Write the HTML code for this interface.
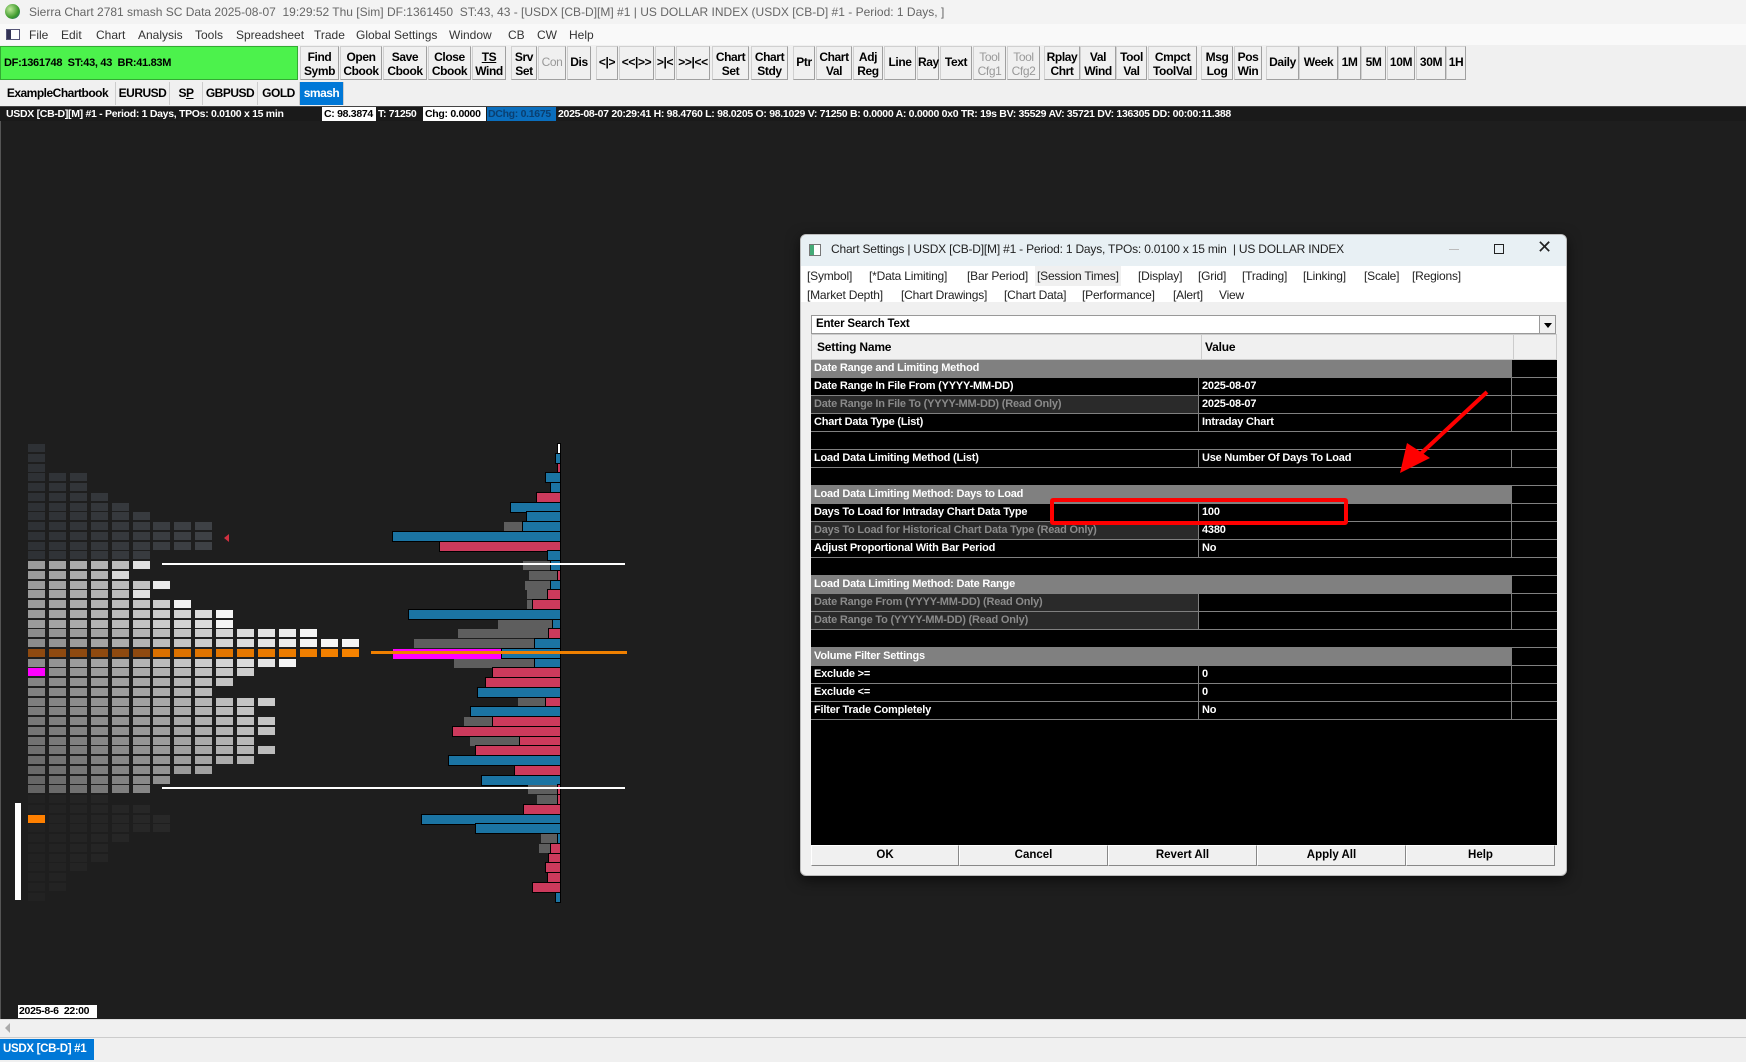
<!DOCTYPE html>
<html><head><meta charset="utf-8"><style>
*{margin:0;padding:0;box-sizing:border-box}
body{width:1746px;height:1062px;overflow:hidden;background:#1e1e1e;font-family:"Liberation Sans",sans-serif;position:relative}
.a{position:absolute;white-space:nowrap}
#title{left:0;top:0;width:1746px;height:24px;background:#f3f3f3;color:#666;font-size:12px;line-height:24px;padding-left:29px}
#menu{left:0;top:24px;width:1746px;height:21px;background:#f9f9f9;font-size:12px;color:#333}
#menu span{position:absolute;top:4px}
#tb{left:0;top:45px;width:1746px;height:61px;background:#f0f0f0}
.b{position:absolute;top:46px;height:34px;background:#f0f0f0;border:1px solid #d0d0d0;border-bottom-color:#a0a0a0;border-right-color:#a0a0a0;font:bold 12px "Liberation Sans",sans-serif;text-align:center;line-height:14px;padding-top:3px;color:#000;letter-spacing:-0.4px}
.b.one{line-height:30px;padding-top:0}
.b.g{color:#999;font-weight:normal}
.t{position:absolute;top:82px;height:23px;font:bold 12px "Liberation Sans",sans-serif;letter-spacing:-0.5px;line-height:23px;text-align:center;border-right:1px solid #ccc;color:#000}
#info{left:0;top:106px;width:1746px;height:15px;background:#1a1a1a;border-top:1px solid #444;font:bold 10.5px "Liberation Sans",sans-serif;letter-spacing:-0.3px;color:#fff;line-height:14px}
#dlg{left:800px;top:234px;width:767px;height:642px;background:#f0f0f0;border:1px solid #bbb;border-radius:6px;box-shadow:0 4px 14px rgba(0,0,0,.6);overflow:hidden}
#dt{position:absolute;left:0;top:0;width:100%;height:34px;background:#e8f0f4;font-size:12px;color:#222;line-height:28px;padding-left:30px;letter-spacing:-0.2px}
#tabs{position:absolute;left:0;top:31px;width:100%;height:36px;background:#fff;font-size:12px;color:#222;letter-spacing:-0.2px}
#tabs span{position:absolute}
.r{position:absolute;left:10px;width:746px;height:18px;border-bottom:1px solid #808080;font:bold 11px "Liberation Sans",sans-serif;letter-spacing:-0.2px;color:#fff;line-height:17px}
.r .n{position:absolute;left:0;top:0;width:388px;height:17px;padding-left:3px;background:#000;border-right:1px solid #808080}
.r .v{position:absolute;left:389px;top:0;width:312px;height:17px;padding-left:2px;background:#000;border-right:1px solid #808080}
.r .x{position:absolute;left:702px;top:0;width:44px;height:17px;background:#000}
.r.s .n{width:701px;background:#808080;border-right:none}
.r.ro .n{background:#2a2a2a;color:#8a8a8a}
.db{position:absolute;top:610px;height:21px;background:#f0f0f0;border:1px solid #fff;border-right-color:#888;border-bottom-color:#888;font:bold 11.5px "Liberation Sans",sans-serif;text-align:center;line-height:19px;color:#000}
</style></head><body>
<div class="a" id="title">Sierra Chart 2781 smash SC Data 2025-08-07 &nbsp;19:29:52 Thu [Sim] DF:1361450 &nbsp;ST:43, 43 - [USDX [CB-D][M] #1 | US DOLLAR INDEX (USDX [CB-D] #1 - Period: 1 Days, ]</div>
<div class="a" style="left:5px;top:4px;width:15px;height:15px;border-radius:50%;background:radial-gradient(circle at 35% 35%,#bfe89a,#3d9a2c 60%,#1f5f8f)"></div>
<div class="a" id="menu">
<span style="left:6px;top:5px;width:14px;height:11px;border:1px solid #557;background:linear-gradient(90deg,#335 0 4px,#fff 4px)"></span>
<span style="left:29px">File</span><span style="left:61px">Edit</span><span style="left:96px">Chart</span><span style="left:138px">Analysis</span><span style="left:195px">Tools</span><span style="left:236px">Spreadsheet</span><span style="left:314px">Trade</span><span style="left:356px">Global Settings</span><span style="left:449px">Window</span><span style="left:508px">CB</span><span style="left:537px">CW</span><span style="left:569px">Help</span></div>
<div class="a" id="tb"></div>
<div class="a" style="left:0;top:46px;width:298px;height:34px;background:#4cf24c;border:1px solid #3a3;font:bold 11px 'Liberation Sans',sans-serif;letter-spacing:-0.3px;line-height:32px;padding-left:3px">DF:1361748 &nbsp;ST:43, 43 &nbsp;BR:41.83M</div>
<div class="b" style="left:300px;width:39px">Find<br>Symb</div>
<div class="b" style="left:340px;width:42px">Open<br>Cbook</div>
<div class="b" style="left:383px;width:44px">Save<br>Cbook</div>
<div class="b" style="left:428px;width:43px">Close<br>Cbook</div>
<div class="b" style="left:472px;width:34px"><u>TS</u><br>Wind</div>
<div class="b" style="left:511px;width:26px">Srv<br>Set</div>
<div class="b one g" style="left:538px;width:28px">Con</div>
<div class="b one" style="left:567px;width:24px">Dis</div>
<div class="b one" style="left:596px;width:22px">&lt;|&gt;</div>
<div class="b one" style="left:619px;width:35px">&lt;&lt;|&gt;&gt;</div>
<div class="b one" style="left:655px;width:20px">&gt;|&lt;</div>
<div class="b one" style="left:676px;width:34px">&gt;&gt;|&lt;&lt;</div>
<div class="b" style="left:712px;width:37px">Chart<br>Set</div>
<div class="b" style="left:751px;width:37px">Chart<br>Stdy</div>
<div class="b one" style="left:793px;width:22px">Ptr</div>
<div class="b" style="left:816px;width:36px">Chart<br>Val</div>
<div class="b" style="left:853px;width:30px">Adj<br>Reg</div>
<div class="b one" style="left:884px;width:32px">Line</div>
<div class="b one" style="left:917px;width:22px">Ray</div>
<div class="b one" style="left:940px;width:32px">Text</div>
<div class="b g" style="left:973px;width:33px">Tool<br>Cfg1</div>
<div class="b g" style="left:1007px;width:33px">Tool<br>Cfg2</div>
<div class="b" style="left:1044px;width:36px">Rplay<br>Chrt</div>
<div class="b" style="left:1080px;width:36px">Val<br>Wind</div>
<div class="b" style="left:1116px;width:31px">Tool<br>Val</div>
<div class="b" style="left:1148px;width:49px">Cmpct<br>ToolVal</div>
<div class="b" style="left:1201px;width:32px">Msg<br>Log</div>
<div class="b" style="left:1234px;width:28px">Pos<br>Win</div>
<div class="b one" style="left:1266px;width:33px">Daily</div>
<div class="b one" style="left:1299px;width:39px">Week</div>
<div class="b one" style="left:1338px;width:23px">1M</div>
<div class="b one" style="left:1361px;width:25px">5M</div>
<div class="b one" style="left:1387px;width:28px">10M</div>
<div class="b one" style="left:1416px;width:30px">30M</div>
<div class="b one" style="left:1446px;width:20px">1H</div>
<div class="t" style="left:0;width:116px">ExampleChartbook</div>
<div class="t" style="left:116px;width:54px">EURUSD</div>
<div class="t" style="left:170px;width:33px">S<u>P</u></div>
<div class="t" style="left:203px;width:55px">GBPUSD</div>
<div class="t" style="left:258px;width:42px">GOLD</div>
<div class="t" style="left:300px;width:44px;background:#0078d7;color:#fff">smash</div>
<div class="a" id="info"><span class="a" style="left:6px">USDX [CB-D][M] #1 - Period: 1 Days, TPOs: 0.0100 x 15 min</span><span class="a" style="left:322px;width:54px;background:#fff;color:#000;padding-left:2px">C: 98.3874</span><span class="a" style="left:378px">T: 71250</span><span class="a" style="left:423px;width:63px;background:#fff;color:#000;padding-left:2px">Chg: 0.0000</span><span class="a" style="left:487px;width:69px;background:#0a6ebd;color:#0a3f70;padding-left:1px">DChg: 0.1675</span><span class="a" style="left:558px">2025-08-07 20:29:41 H: 98.4760 L: 98.0205 O: 98.1029 V: 71250 B: 0.0000 A: 0.0000 0x0 TR: 19s BV: 35529 AV: 35721 DV: 136305 DD: 00:00:11.388</span></div>
<div class="a" style="left:0;top:121px;width:1px;height:898px;background:#555"></div>
<div id="chart"></div>
<div class="a" style="left:162px;top:563px;width:463px;height:2px;background:#fff"></div>
<div class="a" style="left:162px;top:787px;width:463px;height:2px;background:#fff"></div>
<div class="a" style="left:371px;top:651px;width:256px;height:3px;background:#f08000"></div>
<div class="a" style="left:15px;top:803px;width:6px;height:97px;background:#fff"></div>
<div class="a" style="left:224px;top:534px;width:0;height:0;border-top:4px solid transparent;border-bottom:4px solid transparent;border-right:5px solid #d03040"></div>
<div class="a" style="left:18px;top:1005px;width:79px;height:13px;background:#fff;color:#000;font:bold 10.5px 'Liberation Sans',sans-serif;letter-spacing:-0.3px;line-height:13px;padding-left:1px">2025-8-6 &nbsp;22:00</div>
<div class="a" style="left:0;top:1019px;width:1746px;height:18px;background:#f0f0f0;border-top:1px solid #ddd"></div>
<div class="a" style="left:5px;top:1023px;width:0;height:0;border-top:5px solid transparent;border-bottom:5px solid transparent;border-right:5px solid #aaa"></div>
<div class="a" style="left:0;top:1037px;width:1746px;height:25px;background:#f0f0f0;border-top:1px solid #ccc"></div>
<div class="a" style="left:0;top:1039px;width:94px;height:21px;background:#0078d7;color:#fff;font:bold 11.5px 'Liberation Sans',sans-serif;letter-spacing:-0.3px;line-height:21px;padding-left:3px">USDX [CB-D] #1</div>

<div class="a" id="dlg">
<div id="dt">Chart Settings | USDX [CB-D][M] #1 - Period: 1 Days, TPOs: 0.0100 x 15 min &nbsp;| US DOLLAR INDEX</div>
<div style="position:absolute;left:8px;top:9px;width:12px;height:12px;border:1px solid #777;background:linear-gradient(90deg,#4a7 0 4px,#fff 4px)"></div>
<div style="position:absolute;left:648px;top:14px;width:10px;height:1px;background:#bbb"></div>
<div style="position:absolute;left:693px;top:9px;width:10px;height:10px;border:1px solid #222"></div>
<div style="position:absolute;left:736px;top:2px;font-size:18px;color:#222">✕</div>
<div id="tabs">
<span style="left:6px;top:3px">[Symbol]</span><span style="left:68px;top:3px">[*Data Limiting]</span><span style="left:166px;top:3px">[Bar Period]</span><span style="left:234px;top:0;background:#f0f0f0;padding:3px 2px">[Session Times]</span><span style="left:337px;top:3px">[Display]</span><span style="left:397px;top:3px">[Grid]</span><span style="left:441px;top:3px">[Trading]</span><span style="left:502px;top:3px">[Linking]</span><span style="left:563px;top:3px">[Scale]</span><span style="left:611px;top:3px">[Regions]</span>
<span style="left:6px;top:22px">[Market Depth]</span><span style="left:100px;top:22px">[Chart Drawings]</span><span style="left:203px;top:22px">[Chart Data]</span><span style="left:281px;top:22px">[Performance]</span><span style="left:372px;top:22px">[Alert]</span><span style="left:418px;top:22px">View</span></div>
<div style="position:absolute;left:10px;top:80px;width:745px;height:19px;background:#fff;border:1px solid #999;font:bold 11.5px 'Liberation Sans',sans-serif;letter-spacing:-0.2px;line-height:17px;padding-left:4px">Enter Search Text</div>
<div style="position:absolute;left:738px;top:81px;width:16px;height:17px;background:#f0f0f0;border-left:1px solid #999"><div style="margin:7px 0 0 4px;width:0;height:0;border-left:4px solid transparent;border-right:4px solid transparent;border-top:5px solid #000"></div></div>
<div style="position:absolute;left:10px;top:99px;width:746px;height:26px;background:#f0f0f0;border:1px solid #ccc;font:bold 12px 'Liberation Sans',sans-serif;letter-spacing:-0.2px;line-height:24px"><span style="position:absolute;left:5px">Setting Name</span><span style="position:absolute;left:389px;top:0;height:24px;border-left:1px solid #ccc;padding-left:3px">Value</span><span style="position:absolute;left:701px;top:0;height:24px;border-left:1px solid #ccc"></span></div>
<div style="position:absolute;left:10px;top:125px;width:746px;height:485px;background:#000"></div>
<div class="r s" style="top:125px"><div class="n">Date Range and Limiting Method</div><div class="x"></div></div>
<div class="r" style="top:143px"><div class="n">Date Range In File From (YYYY-MM-DD)</div><div class="v">2025-08-07</div><div class="x"></div></div>
<div class="r ro" style="top:161px"><div class="n">Date Range In File To (YYYY-MM-DD) (Read Only)</div><div class="v">2025-08-07</div><div class="x"></div></div>
<div class="r" style="top:179px"><div class="n">Chart Data Type (List)</div><div class="v">Intraday Chart</div><div class="x"></div></div>
<div class="r" style="top:197px"></div>
<div class="r" style="top:215px"><div class="n">Load Data Limiting Method (List)</div><div class="v">Use Number Of Days To Load</div><div class="x"></div></div>
<div class="r" style="top:233px"></div>
<div class="r s" style="top:251px"><div class="n">Load Data Limiting Method: Days to Load</div><div class="x"></div></div>
<div class="r" style="top:269px"><div class="n">Days To Load for Intraday Chart Data Type</div><div class="v">100</div><div class="x"></div></div>
<div class="r ro" style="top:287px"><div class="n">Days To Load for Historical Chart Data Type (Read Only)</div><div class="v">4380</div><div class="x"></div></div>
<div class="r" style="top:305px"><div class="n">Adjust Proportional With Bar Period</div><div class="v">No</div><div class="x"></div></div>
<div class="r" style="top:323px"></div>
<div class="r s" style="top:341px"><div class="n">Load Data Limiting Method: Date Range</div><div class="x"></div></div>
<div class="r ro" style="top:359px"><div class="n">Date Range From (YYYY-MM-DD) (Read Only)</div><div class="v"></div><div class="x"></div></div>
<div class="r ro" style="top:377px"><div class="n">Date Range To (YYYY-MM-DD) (Read Only)</div><div class="v"></div><div class="x"></div></div>
<div class="r" style="top:395px"></div>
<div class="r s" style="top:413px"><div class="n">Volume Filter Settings</div><div class="x"></div></div>
<div class="r" style="top:431px"><div class="n">Exclude &gt;=</div><div class="v">0</div><div class="x"></div></div>
<div class="r" style="top:449px"><div class="n">Exclude &lt;=</div><div class="v">0</div><div class="x"></div></div>
<div class="r" style="top:467px"><div class="n">Filter Trade Completely</div><div class="v">No</div><div class="x"></div></div>
<div class="db" style="left:10px;width:148px">OK</div>
<div class="db" style="left:158px;width:149px">Cancel</div>
<div class="db" style="left:307px;width:149px">Revert All</div>
<div class="db" style="left:456px;width:149px">Apply All</div>
<div class="db" style="left:605px;width:149px">Help</div>
<div style="position:absolute;left:249px;top:263px;width:298px;height:27px;border:4px solid #f00;border-radius:3px"></div>
</div>
<svg class="a" style="left:1380px;top:380px" width="120" height="100"><line x1="107" y1="12" x2="34" y2="80" stroke="#f00" stroke-width="4"/><polygon points="20,93 27,63 50,78" fill="#f00"/></svg>
<script>
var c=document.getElementById('chart'),h='';
function R(x,y,w,hh,col,b){h+='<div class="a" style="left:'+x+'px;top:'+y+'px;width:'+w+'px;height:'+hh+'px;background:'+col+(b?';outline:1px solid #000':'')+'"></div>';}
var cnt=[1,1,1,3,3,4,5,6,9,9,9,6,6,5,7,6,8,10,10,14,16,16,13,11,10,9,12,11,12,12,11,12,11,9,7,6,4,6,7,7,5,4,4,3,2,2,1];
for(var r=0;r<47;r++){var y=Math.round(444+r*9.75);for(var k=0;k<cnt[r];k++){var x=Math.round(28+k*20.9),col;
if(r<12){var v=46+k*2;col='rgb('+v+','+(v+3)+','+(v+7)+')';}
else if(r>=36){var v=34+k;col='rgb('+v+','+v+','+v+')';}
else if(r==21){col=k<6?'#8f4a10':'rgb('+(200+k*3)+','+(100+k*2)+',0)';}
else{var v=r<23?Math.min(245,140+k*8+(r<19?15:0)):Math.max(100,Math.min(220,135+k*7-(r-23)*3));if(k==cnt[r]-1&&r<23)v=Math.min(245,v+30);col='rgb('+v+','+v+','+v+')';}
if(r==23&&k==0)col='#ff00ff';if(r==38&&k==0)col='#ff8000';
R(x,y,17,8,col);}}
var B=[['w',1366],['b',1361],['r',1366],['b',1337],['b',1351],['r',1315],['b',1251],['b',1290],['b',1281,1235],['b',964],['r',1079],['b',1342],['b',1351,1281],['r',1368,1296],['b',1351,1287],['r',1342,1290],['r',1305,1290],['b',1003],['b',1356,1220],['r',1346,1121],['b',1310,1015],['b',1231],['b',1310,1112],['r',1209],['r',1190],['b',1170],['r',1337,1269],['b',1155],['r',1209,1138],['r',1109],['r',1275,1151],['r',1165],['b',1099],['r',1261],['b',1180],['r',1368,1294],['r',1368,1316],['r',1285],['b',1035],['b',1165],['b',1368,1325],['r',1351,1321],['r',1346],['r',1337],['r',1342],['r',1305],['b',1361]];
var E=560;
for(var r=0;r<47;r++){var y=Math.round(444+r*9.75),b=B[r];
if(b[2]){var gx=Math.round(b[2]/2.45);R(gx,y,E-gx,9,'#5e5e5e');}
var col=b[0]=='b'?'#1b74a3':b[0]=='r'?'#cc3a5c':'#fff';var x=Math.round(b[1]/2.45);
if(r==21){R(393,y,x-393,10,'#ff00ff');}
R(x,y,E-x,9,col,true);}
c.innerHTML=h;
</script>
</body></html>
